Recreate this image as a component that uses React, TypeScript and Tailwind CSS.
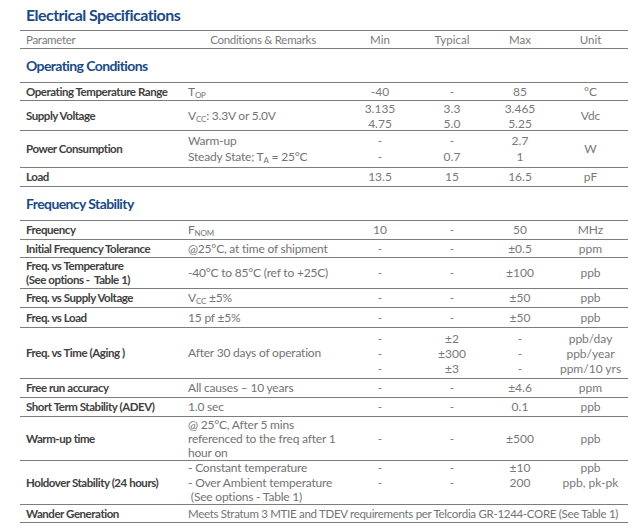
import React from "react";

type Row = {
  param: React.ReactNode;
  cond?: React.ReactNode;
  min?: React.ReactNode;
  typ?: React.ReactNode;
  max?: React.ReactNode;
  unit?: React.ReactNode;
  h: string;
  span?: boolean;
};

const Sub = ({ children }: { children: React.ReactNode }) => (
  <sub className="text-[8px] align-baseline relative top-[2px]">{children}</sub>
);

const lines = (...items: React.ReactNode[]) => (
  <div className="flex flex-col leading-[15px]">
    {items.map((item, i) => (
      <span key={i}>{item}</span>
    ))}
  </div>
);

const SectionTitle = ({ title, h }: { title: string; h: string }) => (
  <div className={`flex items-center border-b border-[#7d7d7d] pl-[6px] ${h}`}>
    <span className="text-[14px] font-bold text-[#1b4a86] tracking-[-0.6px]">{title}</span>
  </div>
);

const operating: Row[] = [
  {
    param: "Operating Temperature Range",
    cond: (
      <span>
        T<Sub>OP</Sub>
      </span>
    ),
    min: "-40",
    typ: "-",
    max: "85",
    unit: "°C",
    h: "h-[18px]",
  },
  {
    param: "Supply Voltage",
    cond: (
      <span>
        V<Sub>CC</Sub>: 3.3V or 5.0V
      </span>
    ),
    min: lines("3.135", "4.75"),
    typ: lines("3.3", "5.0"),
    max: lines("3.465", "5.25"),
    unit: "Vdc",
    h: "h-[30px]",
  },
  {
    param: "Power Consumption",
    cond: (
      <div className="flex flex-col leading-[16px]">
        <span>Warm-up</span>
        <span>
          Steady State; T<Sub>A</Sub> = 25°C
        </span>
      </div>
    ),
    min: (
      <div className="flex flex-col leading-[16px]">
        <span>-</span>
        <span>-</span>
      </div>
    ),
    typ: (
      <div className="flex flex-col leading-[16px]">
        <span>-</span>
        <span>0.7</span>
      </div>
    ),
    max: (
      <div className="flex flex-col leading-[16px]">
        <span>2.7</span>
        <span>1</span>
      </div>
    ),
    unit: "W",
    h: "h-[37px]",
  },
  { param: "Load", min: "13.5", typ: "15", max: "16.5", unit: "pF", h: "h-[19px]" },
];

const stability: Row[] = [
  {
    param: "Frequency",
    cond: (
      <span>
        F<Sub>NOM</Sub>
      </span>
    ),
    min: "10",
    typ: "-",
    max: "50",
    unit: "MHz",
    h: "h-[19px]",
  },
  {
    param: "Initial Frequency Tolerance",
    cond: "@25°C, at time of shipment",
    min: "-",
    typ: "-",
    max: "±0.5",
    unit: "ppm",
    h: "h-[18px]",
  },
  {
    param: (
      <div className="flex flex-col leading-[14px]">
        <span>Freq. vs Temperature</span>
        <span>(See options -&nbsp; Table 1)</span>
      </div>
    ),
    cond: "-40°C to 85°C (ref to +25C)",
    min: "-",
    typ: "-",
    max: "±100",
    unit: "ppb",
    h: "h-[31px]",
  },
  {
    param: "Freq. vs Supply Voltage",
    cond: (
      <span>
        V<Sub>CC</Sub> ±5%
      </span>
    ),
    min: "-",
    typ: "-",
    max: "±50",
    unit: "ppb",
    h: "h-[19px]",
  },
  {
    param: "Freq. vs Load",
    cond: "15 pf ±5%",
    min: "-",
    typ: "-",
    max: "±50",
    unit: "ppb",
    h: "h-[20px]",
  },
  {
    param: "Freq. vs Time (Aging )",
    cond: "After 30 days of operation",
    min: lines("-", "-", "-"),
    typ: lines("±2", "±300", "±3"),
    max: lines("-", "-", "-"),
    unit: lines("ppb/day", "ppb/year", "ppm/10 yrs"),
    h: "h-[51px]",
  },
  {
    param: "Free run accuracy",
    cond: "All causes – 10 years",
    min: "-",
    typ: "-",
    max: "±4.6",
    unit: "ppm",
    h: "h-[19px]",
  },
  {
    param: "Short Term Stability (ADEV)",
    cond: "1.0 sec",
    min: "-",
    typ: "-",
    max: "0.1",
    unit: "ppb",
    h: "h-[19px]",
  },
  {
    param: "Warm-up time",
    cond: (
      <div className="flex flex-col leading-[14px]">
        <span>@ 25°C, After 5 mins</span>
        <span>referenced to the freq after 1</span>
        <span>hour on</span>
      </div>
    ),
    min: "-",
    typ: "-",
    max: "±500",
    unit: "ppb",
    h: "h-[44px]",
  },
  {
    param: "Holdover Stability (24 hours)",
    cond: (
      <div className="flex flex-col leading-[14.5px]">
        <span>- Constant temperature</span>
        <span>- Over Ambient temperature</span>
        <span>&nbsp;(See options - Table 1)</span>
      </div>
    ),
    min: (
      <div className="flex flex-col leading-[14.5px] -mt-[14px]">
        <span>-</span>
        <span>-</span>
      </div>
    ),
    typ: (
      <div className="flex flex-col leading-[14.5px] -mt-[14px]">
        <span>-</span>
        <span>-</span>
      </div>
    ),
    max: (
      <div className="flex flex-col leading-[14.5px] -mt-[14px]">
        <span>±10</span>
        <span>200</span>
      </div>
    ),
    unit: (
      <div className="flex flex-col leading-[14.5px] -mt-[14px]">
        <span>ppb</span>
        <span>ppb, pk-pk</span>
      </div>
    ),
    h: "h-[44px]",
  },
  {
    param: "Wander Generation",
    cond: "Meets Stratum 3 MTIE and TDEV requirements per Telcordia GR-1244-CORE (See Table 1)",
    span: true,
    h: "h-[18px]",
  },
];

const cols = "grid grid-cols-[163px_160px_74px_70px_66px_75px]";

const SpecRow = ({ row }: { row: Row }) => (
  <div className={`${cols} items-center border-b border-[#7d7d7d] ${row.h}`}>
    <div className="pl-[6px] font-bold text-[11.5px] text-[#404040] tracking-[-0.45px] leading-[14px]">
      {row.param}
    </div>
    {row.span ? (
      <div className="col-span-5 pl-[5px] text-[11.5px] text-[#737373] whitespace-nowrap tracking-[-0.3px]">
        {row.cond}
      </div>
    ) : (
      <>
        <div className="pl-[5px] text-[#737373] whitespace-nowrap tracking-[-0.2px]">{row.cond}</div>
        <div className="text-center text-[#787878]">{row.min}</div>
        <div className="text-center text-[#787878]">{row.typ}</div>
        <div className="text-center text-[#787878]">{row.max}</div>
        <div className="text-center text-[#787878]">{row.unit}</div>
      </>
    )}
  </div>
);

export default function App() {
  return (
    <div className="w-[643px] h-[531px] bg-white font-['Lato',sans-serif] text-[12px]">
      <div className="ml-[20px] w-[608px]">
        <div className="h-[31px] flex items-end pb-[3px] pl-[6px] border-b border-[#7d7d7d]">
          <span className="text-[16px] font-bold text-[#1b4a86] tracking-[-0.55px]">Electrical Specifications</span>
        </div>
        <div className={`${cols} h-[18px] items-center border-b border-[#7d7d7d] text-[11.5px] text-[#7a7a7a]`}>
          <div className="pl-[6px] tracking-[-0.3px]">Parameter</div>
          <div className="text-center tracking-[-0.3px]">Conditions &amp; Remarks</div>
          <div className="text-center">Min</div>
          <div className="text-center">Typical</div>
          <div className="text-center">Max</div>
          <div className="text-center">Unit</div>
        </div>
        <SectionTitle title="Operating Conditions" h="h-[34px]" />
        {operating.map((row, i) => (
          <SpecRow key={i} row={row} />
        ))}
        <SectionTitle title="Frequency Stability" h="h-[34px]" />
        {stability.map((row, i) => (
          <SpecRow key={i} row={row} />
        ))}
      </div>
    </div>
  );
}
